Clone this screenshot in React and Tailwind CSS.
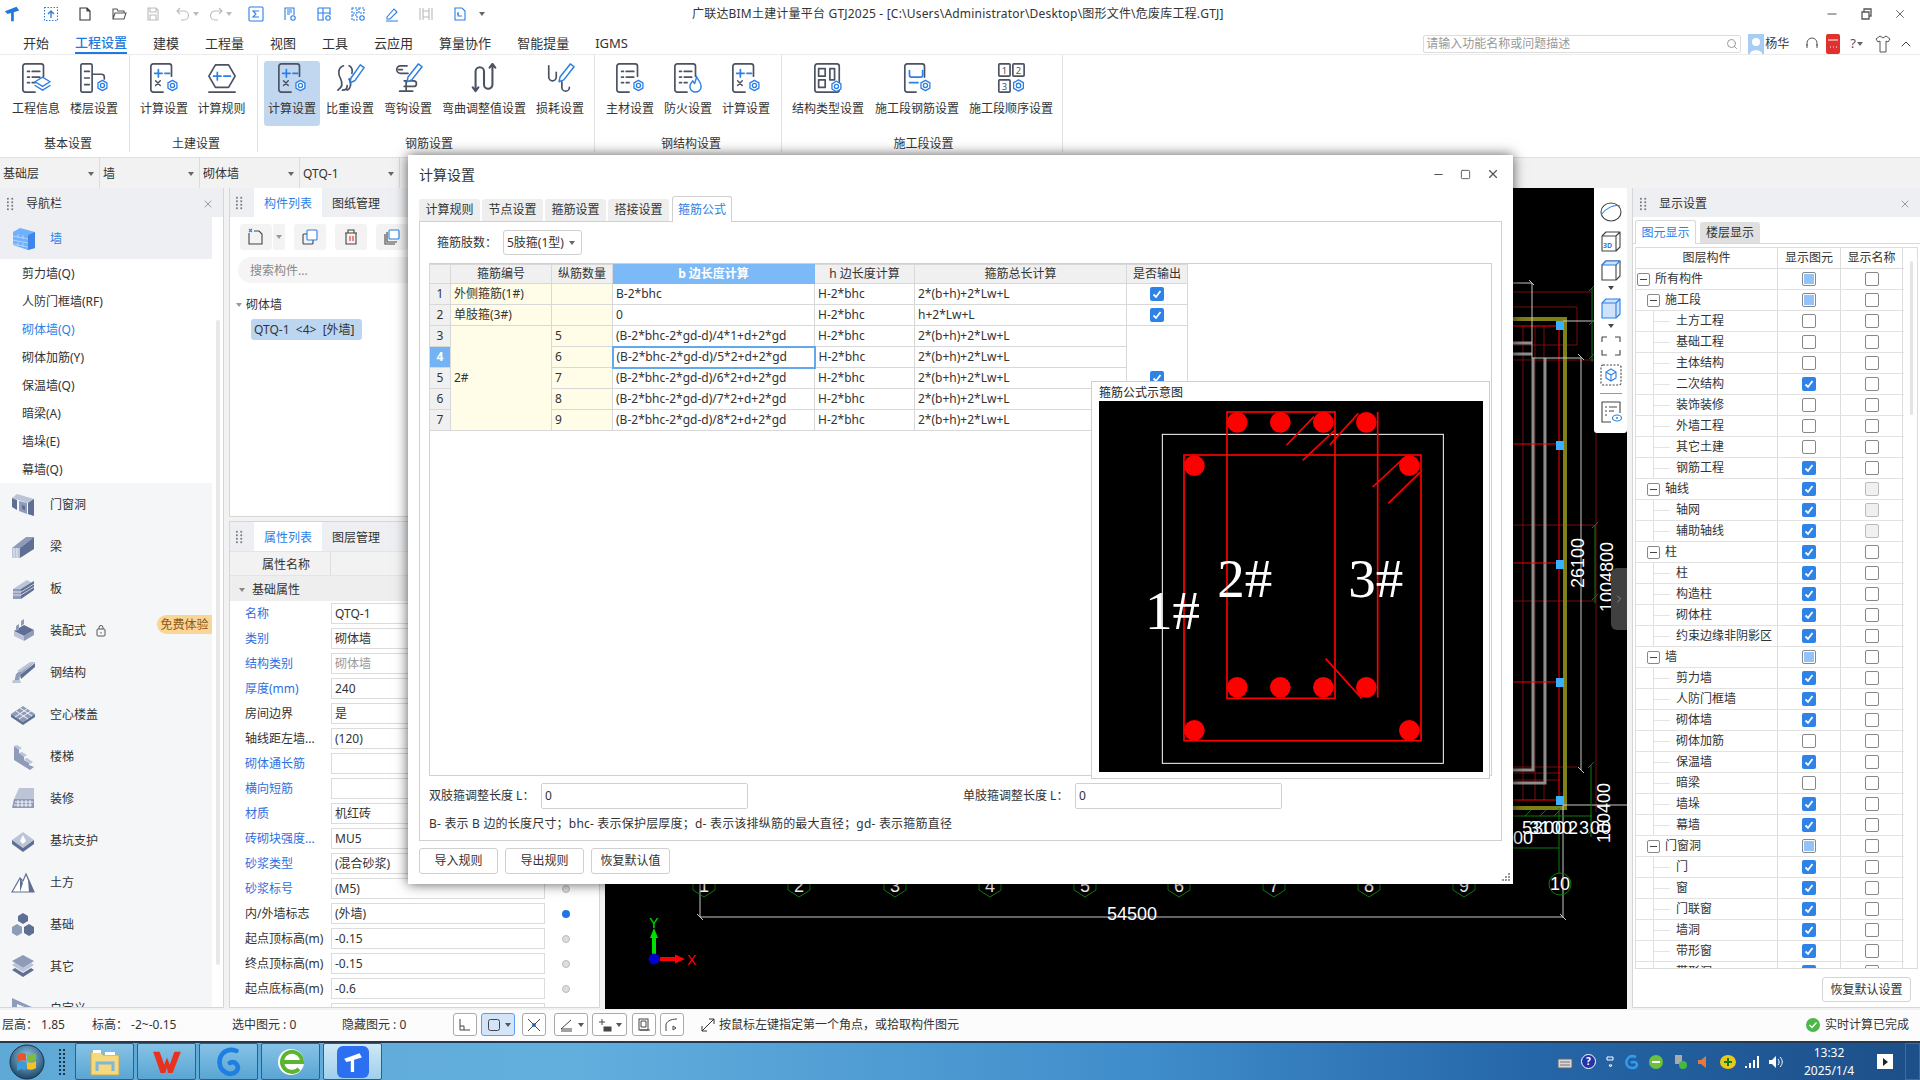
import { ChevronUp, Minus, Search, Square, X, ChevronRight } from 'lucide-react';

const INK = '#4b5262';
const BLUE = '#2b7fe6';

const Gear = ({ x, y, r = 5.5 }) => {
  const pts = [0, 1, 2, 3, 4, 5]
    .map((i) => {
      const a = (Math.PI / 3) * i + Math.PI / 6;
      return `${x + r * Math.cos(a)},${y + r * Math.sin(a)}`;
    })
    .join(' ');
  return (
    <g fill="#fff" stroke={BLUE} strokeWidth="1.4">
      <polygon points={pts} />
      <circle cx={x} cy={y} r={r * 0.4} />
    </g>
  );
};

const Doc = () => <path d="M24 14V3.5A2.5 2.5 0 0 0 21.500 1h-17A2.500 2.500 0 0 0 2 3.500v25A2.500 2.500 0 0 0 4.500 31H15" />;
const ListLines = () => (
  <path d="M7 9h2M12 9h8M7 15h2M12 15h8M7 21h2M12 21h3" />
);
const PlusMinusX = () => (
  <>
    <path d="M6 11h8M10 7v8M17 11h5" stroke={BLUE} />
    <path d="M7 19l5 5M12 19l-5 5" strokeWidth="1.6" />
  </>
);
const Pen = ({ d = 'M27 2l4 3-10 14-5 2 1-5z' }) => <path d={d} stroke={BLUE} strokeWidth="1.6" fill="#fff" />;

const RIBBON_ICONS = {
  info: (
    <>
      <Doc />
      <ListLines />
      <path d="M23 15l8 5-8 5-8-5z" stroke={BLUE} strokeWidth="1.5" fill="#fff" />
      <path d="M15 24l8 5 8-5" stroke={BLUE} strokeWidth="1.5" />
    </>
  ),
  floor: (
    <>
      <path d="M14 29.500A1.500 1.500 0 0 1 12.500 31h-9A1.500 1.500 0 0 1 2 29.500v-27A1.500 1.500 0 0 1 3.500 1h9A1.500 1.500 0 0 1 14 2.500zM14 12h10a3 3 0 0 1 3 3v2" />
      <path d="M6 9h5M6 16h5M6 23h5" />
      <Gear x={25} y={24} />
    </>
  ),
  calc: (
    <>
      <Doc />
      <PlusMinusX />
      <Gear x={25} y={24} />
    </>
  ),
  rule: (
    <>
      <path d="M9 2h14l7 12-7 12H9L2 14z" />
      <path d="M7 14h8M11 10v8M18 14h7" stroke={BLUE} />
      <path d="M2 31h28" />
    </>
  ),
  density: (
    <>
      <path d="M9 3C3 5 3 12 6 17c2 4 2 9-3 12M8 29c3 0 5-2 5-5M15 3c3 1 4 5 3 8M15 17c3 4 2 10-2 12" />
      <Pen />
    </>
  ),
  hook: (
    <>
      <path d="M15 3H8a3.500 3.500 0 0 0 0 8h8M6 7h4M12 25h10a3 3 0 0 0 0-6H12M7 30h14M14 20v10" />
      <Pen d="M27 1l4 3-11 14-5 2 1-5z" />
    </>
  ),
  bend: <path d="M7 29V9a4.500 4.500 0 0 1 9 0v14a4.500 4.500 0 0 0 9 0V2M4 26l3 4 3-4M22 5l3-4 3 4" strokeWidth="2.200" />,
  loss: (
    <>
      <path d="M4 3v12a4 4 0 0 0 8 0V10M18 20v6a4 4 0 0 0 8 0" />
      <Pen d="M27 1l4 3-11 14-5 2 1-5z" />
    </>
  ),
  main: (
    <>
      <Doc />
      <ListLines />
      <Gear x={25} y={24} />
    </>
  ),
  fire: (
    <>
      <Doc />
      <ListLines />
      <path d="M25 14c1 4 5 6 5 11a6 6 0 0 1-12 0c0-3 2-4 3-6 1 1 1 2 2 3 1-3 2-5 2-8z" stroke={BLUE} strokeWidth="1.500" fill="#fff" />
    </>
  ),
  struct: (
    <>
      <rect x="2" y="1" width="26" height="30" rx="2.500" />
      <rect x="6" y="6" width="7" height="8" />
      <rect x="6" y="18" width="7" height="8" />
      <path d="M18 6h5v12h-5z" />
      <Gear x={25} y={25} />
    </>
  ),
  stage: (
    <>
      <path d="M24 15V3.500A2.500 2.500 0 0 0 21.500 1h-16A2.500 2.500 0 0 0 3 3.500v25A2.500 2.500 0 0 0 5.500 31H15" />
      <path d="M8 8v5a2 2 0 0 0 2 2h10a2 2 0 0 0 2-2V8M8 21h9" stroke={BLUE} />
      <Gear x={25} y={24} />
    </>
  ),
  order: (
    <>
      <rect x="3" y="1" width="12" height="13" rx="1" />
      <rect x="18" y="1" width="12" height="13" rx="1" />
      <rect x="3" y="18" width="12" height="13" rx="1" />
      <text x="9" y="12" fontSize="10" textAnchor="middle" fill={INK} stroke="none">1</text>
      <text x="24" y="12" fontSize="10" textAnchor="middle" fill={INK} stroke="none">2</text>
      <text x="9" y="29" fontSize="10" textAnchor="middle" fill={INK} stroke="none">3</text>
      <Gear x={24} y={24} r={6} />
    </>
  ),
};

const RIBBON = [
  { label: '基本设置', cls: 'w-[130px] pl-[7px]', items: [['info', '工程信息', 'w-[58px]'], ['floor', '楼层设置', 'w-[58px]']] },
  { label: '土建设置', cls: 'w-[128px] pl-[5px]', items: [['calc', '计算设置', 'w-[58px]'], ['rule', '计算规则', 'w-[57px]']] },
  {
    label: '钢筋设置',
    cls: 'w-[337px] pl-[6px]',
    items: [
      ['calc', '计算设置', 'w-[56px] bg-[#c0d7ef] rounded-[3px]'],
      ['density', '比重设置', 'w-[60px]'],
      ['hook', '弯钩设置', 'w-[56px]'],
      ['bend', '弯曲调整值设置', 'w-[96px]'],
      ['loss', '损耗设置', 'w-[56px]'],
    ],
  },
  { label: '钢结构设置', cls: 'w-[187px] pl-[6px]', items: [['main', '主材设置', 'w-[58px]'], ['fire', '防火设置', 'w-[58px]'], ['calc', '计算设置', 'w-[58px]']] },
  { label: '施工段设置', cls: 'w-[281px] pl-[3px]', items: [['struct', '结构类型设置', 'w-[86px]'], ['stage', '施工段钢筋设置', 'w-[92px]'], ['order', '施工段顺序设置', 'w-[96px]']] },
];

const TABS = ['开始', '工程设置', '建模', '工程量', '视图', '工具', '云应用', '算量协作', '智能提量', 'IGMS'];

const Quick = ({ children, cls = 'w-[16px]', color = '#2b7fe6' }) => (
  <svg viewBox="0 0 16 16" className={`h-[16px] shrink-0 ${cls}`} fill="none" stroke={color} strokeWidth="1.100">
    {children}
  </svg>
);

const Caret = ({ color = '#666', cls = '' }) => (
  <span className={`inline-block h-0 w-0 border-x-[3px] border-t-[4px] border-x-transparent ${cls}`} style={{ borderTopColor: color }} />
);

function TitleBar() {
  return (
    <div className="flex h-[27px] items-center bg-white">
      <div className="flex w-[692px] shrink-0 items-center">
        <svg viewBox="0 0 20 20" className="ml-[3px] h-[18px] w-[18px]">
          <path d="M2 7l13-5 3 4-6 2v10h-3V9L5 10z" fill="#1f7ae0" />
        </svg>
        <div className="ml-[22px] flex items-center gap-[18px]">
          <Quick>
            <rect x="1.500" y="1.500" width="13" height="13" strokeDasharray="1.500 1.500" />
            <path d="M8 12V5M5 8l3-3 3 3" strokeWidth="1.400" />
          </Quick>
          <Quick color="#333">
            <path d="M3 2h7l3 3v9H3zM10 2v3h3" />
          </Quick>
          <Quick color="#555">
            <path d="M2 13V3h4l1 2h6v2M2 13l2-6h11l-2 6z" />
          </Quick>
          <Quick color="#bbb">
            <path d="M3 2h8l2 2v10H3zM5 2v4h6V2M5 14v-5h6v5" />
          </Quick>
          <div className="-ml-[4px] flex items-center gap-[2px]">
            <Quick color="#bbb">
              <path d="M5 2L2 5l3 3M2 5h7a4 4 0 0 1 0 9H6" />
            </Quick>
            <Caret color="#bbb" />
          </div>
          <div className="-ml-[9px] flex items-center gap-[2px]">
            <Quick color="#bbb">
              <path d="M11 2l3 3-3 3M14 5H7a4 4 0 0 0 0 9h3" />
            </Quick>
            <Caret color="#bbb" />
          </div>
          <div className="-ml-[2px]">
            <Quick>
              <rect x="1" y="1" width="14" height="14" rx="1" />
              <path d="M11 5H5l3 3-3 3h6" />
            </Quick>
          </div>
          <Quick>
            <path d="M3 14V2h9v7M5 4h5M5 6h5M5 8h3" />
            <circle cx="11" cy="12" r="2.200" />
          </Quick>
          <Quick>
            <path d="M2 2h12v7M2 2v12h6M2 7h12M7 2v12" />
            <circle cx="12" cy="12" r="2.200" />
          </Quick>
          <Quick>
            <path d="M2 2h5v5H2zM9 2h5v5H9zM2 9h5v5H2z" strokeDasharray="2 1" />
            <circle cx="12" cy="12" r="2.200" />
          </Quick>
          <Quick>
            <path d="M3 11l7-8 3 3-7 7H3zM2 15h12" />
          </Quick>
          <Quick color="#bbb">
            <path d="M2 2v12M14 2v12M5 2v12M11 2v12M5 5h6M5 11h6" />
          </Quick>
          <Quick>
            <path d="M3 14V2h7l3 3v9zM6 6v4h4M5 8h2" />
          </Quick>
          <Caret color="#666" cls="-ml-[7px]" />
        </div>
      </div>
      <div className="text-[12px] tracking-[0.2px] whitespace-nowrap text-[#333]">
        广联达BIM土建计量平台 GTJ2025 - [C:\Users\Administrator\Desktop\图形文件\危废库工程.GTJ]
      </div>
      <div className="ml-auto flex items-center gap-[21px] pr-[13px] text-[#555]">
        <Minus size={14} strokeWidth={2} />
        <svg viewBox="0 0 12 12" className="h-[12px] w-[12px]" fill="none" stroke="#555" strokeWidth="1.300">
          <path d="M2 4h7v7H2zM4 4V1h7v7H9" />
        </svg>
        <X size={14} strokeWidth={1.500} />
      </div>
    </div>
  );
}

function TabBar() {
  return (
    <div className="flex h-[28px] items-stretch border-b border-[#ececec] bg-white">
      <div className="flex items-stretch pl-[23px] text-[13px] text-[#333]">
        {TABS.map((t) => (
          <div key={t} className={`mr-[26px] flex items-center pt-[6px] ${t === '工程设置' ? 'border-b-[2px] border-[#1f7ae0] font-medium text-[#1f7ae0]' : ''}`}>
            {t}
          </div>
        ))}
      </div>
      <div className="ml-auto flex items-center pt-[6px] pr-[6px]">
        <div className="flex h-[18px] w-[318px] items-center justify-between rounded-[2px] border border-[#dcdcdc] px-[2px] text-[12px] text-[#999]">
          请输入功能名称或问题描述
          <Search size={12} />
        </div>
        <svg viewBox="0 0 16 20" className="ml-[7px] h-[20px] w-[16px]">
          <rect width="16" height="20" fill="#a8cdf5" />
          <circle cx="8" cy="8" r="4" fill="#fff" />
          <path d="M2 20c0-5 12-5 12 0z" fill="#fff" />
        </svg>
        <span className="ml-[1px] text-[12px] text-[#333]">杨华</span>
        <svg viewBox="0 0 16 16" className="ml-[15px] h-[16px] w-[16px]" fill="none" stroke="#555">
          <path d="M3 10V7a5 5 0 0 1 10 0v3M3 8v4M13 8v4" />
        </svg>
        <svg viewBox="0 0 14 20" className="ml-[6px] h-[20px] w-[14px]">
          <rect width="14" height="20" rx="2" fill="#e0312f" />
          <path d="M2 6h10M4 13h1M7 13h1M10 13h1" stroke="#fff" strokeWidth="1" />
        </svg>
        <span className="ml-[10px] text-[13px] text-[#555]">?</span>
        <Caret cls="ml-[1px]" />
        <svg viewBox="0 0 16 18" className="ml-[12px] h-[18px] w-[16px]" fill="none" stroke="#555">
          <path d="M5 1L1 4l2 3 2-1v11h6V6l2 1 2-3-4-3-3 2z" />
        </svg>
        <ChevronUp size={16} strokeWidth={1.500} className="ml-[7px] text-[#444]" />
      </div>
    </div>
  );
}

function Ribbon() {
  return (
    <div className="flex h-[102px] bg-white">
      {RIBBON.map((g) => (
        <div key={g.label} className={`flex h-[97px] flex-col border-r border-[#e3e3e3] ${g.cls}`}>
          <div className="mt-[6px] flex h-[70px]">
            {g.items.map(([icon, label, cls], i) => (
              <div key={label + i} className={`flex flex-col items-center pt-[2px] ${cls}`}>
                <svg viewBox="0 0 32 32" className="h-[30px] w-[30px]" fill="none" stroke={INK} strokeWidth="1.800" strokeLinecap="round" strokeLinejoin="round">
                  {RIBBON_ICONS[icon]}
                </svg>
                <span className="mt-[8px] text-[12px] leading-[16px] whitespace-nowrap text-[#333]">{label}</span>
              </div>
            ))}
          </div>
          <div className="mt-[10px] text-center text-[12px] leading-[16px] text-[#333]">{g.label}</div>
        </div>
      ))}
    </div>
  );
}

function ComboBar() {
  return (
    <div className="flex h-[31px] items-center border-t border-[#dfdfdf] bg-[#f2f2f2]">
      {['基础层', '墙', '砌体墙', 'QTQ-1'].map((c) => (
        <div key={c} className="flex h-full w-[100px] items-center justify-between border-r border-[#dcdcdc] pt-[2px] pr-[5px] pl-[3px] text-[12px] text-[#333]">
          {c}
          <Caret />
        </div>
      ))}
    </div>
  );
}

const C1 = '#5f6f93';
const C2 = '#8e9cba';
const C3 = '#bcc5d8';

const NAV_ICONS = {
  wall: (
    <>
      <path d="M1 6l7-4 15 4v16l-7 2-15-5z" fill="#6fb0ff" />
      <path d="M16 9l7-3v16l-7 2z" fill="#3f86e8" />
      <path d="M1 10l15 3M1 14l15 3M1 18l15 3M6 8v4M11 9v4M6 16v4M11 17v4" stroke="#bcd8fb" strokeWidth=".8" fill="none" />
    </>
  ),
  door: (
    <>
      <path d="M1 6l5-4 17 5v17l-6-2V11L1 6z" fill={C3} />
      <path d="M1 6l5 2v10l-5-3z" fill={C1} />
      <path d="M8 9l8 2v11l-8-3z" fill={C2} />
      <path d="M11 13l3 1v4l-3-1z" fill={C1} />
      <path d="M17 11l6-4v17l-6-2z" fill={C1} />
    </>
  ),
  beam: (
    <>
      <path d="M1 14l14-11h8L9 14z" fill={C2} />
      <path d="M9 14L23 3v12L9 24z" fill={C1} />
      <path d="M1 14h8v10H1z" fill={C3} />
      <path d="M3 14v10M6 14v10" stroke="#fff" strokeWidth=".6" />
    </>
  ),
  slab: (
    <>
      <path d="M2 13l14-9 7 4-13 9z" fill={C3} />
      <path d="M2 13h8v10H2z" fill={C2} />
      <path d="M10 13l13-8v9L10 23z" fill={C1} />
      <path d="M2 16h8M2 19h8M10 16l13-8M10 19l13-8" stroke="#fff" strokeWidth=".7" />
    </>
  ),
  pre: (
    <>
      <path d="M3 13l10-6 10 5-10 6z" fill={C1} />
      <path d="M3 13l10 5v5L3 18z" fill={C3} />
      <path d="M13 18l10-6v5l-10 6z" fill={C2} />
      <path d="M5 8l3-2v6l-3 1zM10 3l3-2v5l-3 2z" fill={C2} />
    </>
  ),
  steel: (
    <>
      <path d="M3 23l2-9L20 2h4L9 15l-1 8z" fill={C2} />
      <path d="M1 23h9l-1-3H2zM6 11l4 1 14-10h-5z" fill={C3} />
      <path d="M9 15L24 3v4L10 19z" fill={C1} />
    </>
  ),
  hollow: (
    <>
      <path d="M0 12l12-8 12 8-12 8z" fill={C2} />
      <path d="M0 12l12 8v3L0 15zM12 20l12-8v3l-12 8z" fill={C1} />
      <path d="M5 9l12 8M9 6l12 8M4 15l12-8M8 17L20 9" stroke="#fff" strokeWidth=".9" />
    </>
  ),
  stair: (
    <>
      <path d="M3 2l5 3v4l5 3v4l5 3v2l5 2-4 3L3 16z" fill={C2} />
      <path d="M3 2l3-1 5 3-3 2zM8 9l3-1 5 3-3 2zM13 15l3-1 6 4-3 2z" fill={C3} />
    </>
  ),
  deco: (
    <>
      <path d="M8 2h15v11H3z" fill={C3} />
      <path d="M3 13h20v9H1z" fill={C2} />
      <path d="M4 16h18M3 19h18M7 14v7M11 14v7M15 14v7M19 14v7" stroke="#fff" strokeWidth=".9" />
    </>
  ),
  pit: (
    <>
      <path d="M1 12l11-8 11 8-11 8z" fill={C3} />
      <path d="M1 12l11 8v4L1 16zM12 20l11-8v4l-11 8z" fill={C1} />
      <path d="M9 13l3-6 3 6-3 3z" fill="#fff" />
    </>
  ),
  earth: (
    <>
      <path d="M1 22L9 8l3 3 3-7 8 18z" fill="#fff" stroke={C1} strokeWidth="1.200" />
      <path d="M9 8l3 5-3 9zM15 4l2 6 1 12h5z" fill={C1} />
    </>
  ),
  base: (
    <>
      <path d="M12 1l5 3v5l-5 3-5-3V4z" fill={C1} />
      <path d="M6 12l5 3v6l-5 3-5-3v-6z" fill={C2} />
      <path d="M18 12l5 3v6l-5 3-5-3v-6z" fill={C1} />
    </>
  ),
  other: (
    <>
      <path d="M12 1l11 6-11 7L1 7z" fill={C2} />
      <path d="M1 11l3-2 8 5 8-5 3 2-11 7z" fill={C3} />
      <path d="M1 16l3-2 8 5 8-5 3 2-11 7z" fill={C1} />
    </>
  ),
  custom: <path d="M1 2l22 10-22 11zM6 8v9l10-5z" fill={C2} fillRule="evenodd" />,
};

const NavIcon = ({ id }) => (
  <svg viewBox="0 0 24 26" className="h-[26px] w-[24px] shrink-0">
    {NAV_ICONS[id]}
  </svg>
);

const PanelGrip = () => (
  <svg viewBox="0 0 8 14" className="h-[14px] w-[7px] shrink-0" fill="#777">
    {[1, 5, 9, 13].map((y) => (
      <g key={y}>
        <rect x="0" y={y - 1} width="2" height="2" />
        <rect x="5" y={y - 1} width="2" height="2" />
      </g>
    ))}
  </svg>
);

const SUB_ITEMS = ['剪力墙(Q)', '人防门框墙(RF)', '砌体墙(Q)', '砌体加筋(Y)', '保温墙(Q)', '暗梁(A)', '墙垛(E)', '幕墙(Q)'];
const NAV_REST = [
  ['door', '门窗洞'],
  ['beam', '梁'],
  ['slab', '板'],
  ['pre', '装配式'],
  ['steel', '钢结构'],
  ['hollow', '空心楼盖'],
  ['stair', '楼梯'],
  ['deco', '装修'],
  ['pit', '基坑支护'],
  ['earth', '土方'],
  ['base', '基础'],
  ['other', '其它'],
  ['custom', '自定义'],
];

function NavPanel() {
  return (
    <div className="flex h-[820px] w-[224px] shrink-0 flex-col overflow-hidden border-r border-b border-[#d6d6d6] bg-white">
      <div className="flex h-[29px] shrink-0 items-center bg-[#eeeff2] pt-[2px] pr-[9px] pl-[7px] text-[12px] text-[#333]">
        <PanelGrip />
        <span className="ml-[12px]">导航栏</span>
        <X size={12} className="ml-auto text-[#999]" />
      </div>
      <div className="flex min-h-0 flex-1">
        <div className="relative w-[212px] shrink-0">
          <div className="flex h-[42px] items-center bg-[#eeeff2] pt-[1px] pl-[12px]">
            <NavIcon id="wall" />
            <span className="ml-[14px] text-[12px] text-[#2b7fe6]">墙</span>
          </div>
          {SUB_ITEMS.map((s) => (
            <div key={s} className={`flex h-[28px] items-center pt-[2px] pl-[22px] text-[12px] ${s === '砌体墙(Q)' ? 'text-[#2b7fe6]' : 'text-[#333]'}`}>
              {s}
            </div>
          ))}
          <div className="bg-[#f5f6f8]">
            {NAV_REST.map(([id, label]) => (
              <div key={id} className="flex h-[42px] items-center pt-[2px] pl-[11px] text-[12px] text-[#333]">
                <NavIcon id={id} />
                <span className="ml-[15px]">{label}</span>
                {id === 'pre' && (
                  <svg viewBox="0 0 10 12" className="ml-[10px] h-[12px] w-[10px]" fill="none" stroke="#555">
                    <rect x="1" y="4" width="8" height="7" rx="1" />
                    <path d="M3 4V2.500a2 2 0 0 1 4 0V4M5 7v1.500" />
                  </svg>
                )}
                {id === 'pre' && (
                  <div className="absolute top-[398px] right-0 flex h-[19px] w-[55px] items-center justify-center rounded-l-full bg-[#fbd596] text-[12px] text-[#8a5a1a]">
                    免费体验
                  </div>
                )}
              </div>
            ))}
          </div>
        </div>
        <div className="mt-[103px] ml-[4px] h-[645px] w-[4px] rounded-full bg-[#e8e8e8]" />
      </div>
    </div>
  );
}

const ToolBtn = ({ children }) => (
  <div className="flex h-[26px] w-[32px] items-center justify-center rounded-[3px] bg-[#f3f3f3]">
    <svg viewBox="0 0 18 18" className="h-[18px] w-[18px]" fill="none" stroke="#444" strokeWidth="1.100">
      {children}
    </svg>
  </div>
);

const PROPS = [
  ['名称', 'QTQ-1', 1],
  ['类别', '砌体墙', 1],
  ['结构类别', '砌体墙', 1, 1],
  ['厚度(mm)', '240', 1],
  ['房间边界', '是', 0],
  ['轴线距左墙...', '(120)', 0],
  ['砌体通长筋', '', 1],
  ['横向短筋', '', 1],
  ['材质', '机红砖', 1],
  ['砖砌块强度...', 'MU5', 1],
  ['砂浆类型', '(混合砂浆)', 1],
  ['砂浆标号', '(M5)', 1],
  ['内/外墙标志', '(外墙)', 0],
  ['起点顶标高(m)', '-0.15', 0],
  ['终点顶标高(m)', '-0.15', 0],
  ['起点底标高(m)', '-0.6', 0],
  ['', '', 0],
];

function PanelTabs({ first, second }) {
  return (
    <div className="flex h-[29px] shrink-0 items-stretch bg-[#eeeff2] text-[12px]">
      <div className="flex w-[24px] items-center pl-[6px]">
        <PanelGrip />
      </div>
      <div className="flex w-[68px] items-center justify-center bg-white pt-[2px] text-[#2b7fe6]">{first}</div>
      <div className="flex w-[68px] items-center justify-center pt-[2px] text-[#333]">{second}</div>
    </div>
  );
}

function MiddlePanels() {
  return (
    <div className="ml-[5px] flex w-[371px] shrink-0 flex-col">
      <div className="flex h-[329px] flex-col overflow-hidden border border-t-0 border-[#d6d6d6] bg-white">
        <PanelTabs first="构件列表" second="图纸管理" />
        <div className="mt-[7px] flex gap-[9px] pl-[10px]">
          <div className="flex items-center">
            <ToolBtn>
              <path d="M2 5v11h13V6l-3-3H7" />
              <path d="M2 1l3 3M5 1L2 4" stroke={BLUE} />
            </ToolBtn>
            <div className="ml-[1px] flex h-[26px] w-[12px] items-center justify-center rounded-[2px] bg-[#f3f3f3]">
              <Caret color="#999" />
            </div>
          </div>
          <ToolBtn>
            <rect x="2" y="6" width="10" height="10" rx="1" />
            <rect x="6" y="2" width="10" height="10" rx="1" stroke={BLUE} fill="#fff" />
          </ToolBtn>
          <ToolBtn>
            <path d="M3 5h12M6 5V2h6v3M4 5v11h10V5" />
            <path d="M8 8v5M11 8v5" stroke="#e0312f" />
          </ToolBtn>
          <ToolBtn>
            <path d="M2 6v10h10M4 4v10h10" />
            <rect x="6" y="2" width="10" height="9" rx="1" stroke={BLUE} fill="#fff" />
          </ToolBtn>
        </div>
        <div className="mt-[7px] ml-[8px] flex h-[26px] items-center rounded-full bg-[#f5f5f5] pt-[2px] pl-[12px] text-[12px] text-[#888]">搜索构件...</div>
        <div className="mt-[12px] flex h-[20px] items-center pl-[6px] text-[12px] text-[#333]">
          <Caret color="#999" cls="mr-[4px]" />
          砌体墙
        </div>
        <div className="mt-[4px] ml-[21px] flex h-[21px] w-[111px] items-center rounded-[3px] bg-[#bcd6f1] pl-[3px] text-[12px] whitespace-pre text-[#333]">
          QTQ-1  {'<4>'}  [外墙]
        </div>
      </div>
      <div className="mt-[4px] flex h-[487px] flex-col overflow-hidden border border-[#d6d6d6] bg-white">
        <PanelTabs first="属性列表" second="图层管理" />
        <div className="flex h-[25px] shrink-0 items-stretch border-y border-[#e4e4e4] bg-[#f2f2f2] text-[12px] text-[#333]">
          <div className="flex w-[101px] items-center justify-center border-r border-[#dcdcdc] pt-[2px] pl-[12px]">属性名称</div>
        </div>
        <div className="flex h-[25px] shrink-0 items-center bg-[#eeeeee] pt-[2px] pl-[9px] text-[12px] text-[#333]">
          <Caret color="#888" cls="mr-[7px]" />
          基础属性
        </div>
        <div className="flex min-h-0 flex-1 flex-col text-[12px]">
          {PROPS.map(([k, v, blue, muted], i) => (
            <div key={k + i} className="flex h-[25px] shrink-0 items-center">
              <div className={`w-[101px] shrink-0 truncate pl-[15px] whitespace-nowrap ${blue ? 'text-[#2e6fe0]' : 'text-[#333]'}`}>{k}</div>
              <div className={`flex h-[21px] w-[214px] shrink-0 items-center border border-[#dcdcdc] pl-[3px] ${muted ? 'text-[#999]' : 'text-[#333]'}`}>{v}</div>
              <div className={`ml-[17px] h-[8px] w-[8px] rounded-full ${k === '内/外墙标志' ? 'bg-[#1f75e8]' : 'border border-[#bbb] bg-[#ddd]'}`} />
            </div>
          ))}
        </div>
      </div>
    </div>
  );
}

const AXES = [704, 799, 895, 990, 1085, 1179, 1274, 1369, 1464];

function CadDrawing() {
  const red = [326, 444, 563, 682, 800];
  return (
    <svg viewBox="605 188 1022 821" className="h-full w-full" fill="none">
      {/* dark red grid */}
      <g stroke="#7a0c0c" strokeWidth="1">
        <path d="M1513 292H1592M1513 307H1577V345H1513M1513 360H1594M1513 525H1594M1513 601H1594M1513 767H1577M1513 773H1560M1513 780H1560M1596 433V812M1523 326V800M1535 326V800M1544 326V800" />
      </g>
      <g stroke="#808018" strokeWidth="4">
        <path d="M1513 319H1565V808H1513" />
      </g>
      <g stroke="#8d8d8d" strokeWidth="3">
        <path d="M1533 358V770H1513M1545 358V783H1513M1513 343H1532M1513 354H1532" />
      </g>
      <g stroke="#ff0000" strokeWidth="1">
        {red.map((y) => (
          <path key={y} d={`M1513 ${y}H1559`} />
        ))}
        <path d="M1559 326V800" />
      </g>
      <g stroke="#c8c8c8" strokeWidth="1">
        <path d="M1513 283H1532V358H1581V770M1563 321H1594M1563 805H1627M1563 805V917H700V884" />
        <path d="M1529 280l5 5M1578 354l6 6M1578 767l6 6M1560 914l6 6M697 914l6 6" />
      </g>
      <g stroke="#0d7d0d" strokeWidth="1">
        <path d="M1592 288V362M1595 525V603M1591 765V837M1513 816H1592M1513 848H1559M1559 808V873" />
        <path d="M1589 291l6-6M1589 325l6-6M1589 359l6-6M1592 528l6-6M1592 600l6-6M1588 768l6-6M1588 834l6-6M1525 816l6-6M1540 816l6-6M1554 816l6-6" />
        <circle cx="1560" cy="884" r="11" />
        {AXES.map((x) => (
          <path key={x} d={`M${x - 11} 884V890L${x} 897L${x + 11} 890V884`} />
        ))}
      </g>
      <g fill="#3bb0ff">
        {[321, 441, 560, 678, 796].map((y) => (
          <rect key={y} x="1556" y={y} width="8" height="9" />
        ))}
      </g>
      <g fill="#fff" fontFamily="'Liberation Sans',sans-serif" fontSize="18">
        <text x="1132" y="920" textAnchor="middle">54500</text>
        <text x="1560" y="890" textAnchor="middle">10</text>
        {AXES.map((x, i) => (
          <text key={x} x={x} y="892" textAnchor="middle">{i + 1}</text>
        ))}
        <text x="1522" y="834" letterSpacing="1">5300</text>
        <text x="1529" y="834" letterSpacing="1">3100</text>
        <text x="1568" y="834" letterSpacing="1">2300</text>
        <text x="1513" y="844">00</text>
        <text transform="rotate(-90 1584 563)" x="1584" y="563" textAnchor="middle">26100</text>
        <text transform="rotate(-90 1613 577)" x="1613" y="577" textAnchor="middle">1004800</text>
        <text transform="rotate(-90 1610 813)" x="1610" y="813" textAnchor="middle">100400</text>
      </g>
      {/* axis gizmo */}
      <path d="M654 955V936" stroke="#00e000" strokeWidth="4" />
      <path d="M654 928l-4 10h8z" fill="#00e000" />
      <path d="M660 959H678" stroke="#ff0000" strokeWidth="4" />
      <path d="M685 959l-10-4.500v9z" fill="#ff0000" />
      <circle cx="654" cy="959" r="5.500" fill="#0000c8" />
      <text x="654" y="928" fill="#00e000" fontSize="14" textAnchor="middle" fontFamily="'Liberation Sans',sans-serif">Y</text>
      <text x="687" y="965" fill="#ff0000" fontSize="14" fontFamily="'Liberation Sans',sans-serif">X</text>
    </svg>
  );
}

const ViewIcon = ({ children }) => (
  <svg viewBox="0 0 22 22" className="h-[22px] w-[22px]" fill="none" stroke="#444" strokeWidth="1.100" strokeLinejoin="round">
    {children}
  </svg>
);

function CanvasArea() {
  return (
    <div className="relative ml-[5px] h-[821px] w-[1022px] shrink-0 overflow-hidden bg-black">
      <CadDrawing />
      <div className="absolute top-0 right-0 flex h-[245px] w-[33px] flex-col items-center gap-[7px] rounded-b-[3px] bg-white pt-[13px]">
        <ViewIcon>
          <ellipse cx="11" cy="11" rx="10" ry="9" />
          <path d="M1 14C6 7 14 3 20 5" stroke={BLUE} />
        </ViewIcon>
        <ViewIcon>
          <path d="M2 6h14v15H2zM2 6l4-4h14v15l-4 4M16 6l4-4" />
          <text x="3" y="18" fontSize="7" fontWeight="700" fill={BLUE} stroke="none">3D</text>
        </ViewIcon>
        <div className="flex flex-col items-center gap-[5px]">
          <ViewIcon>
            <path d="M6 2h14v15l-4 4H2V6z" />
            <path d="M2 6l4-4h14l-4 4z" fill="#cfe2fa" stroke={BLUE} />
            <path d="M16 6v15" />
          </ViewIcon>
          <Caret color="#444" />
        </div>
        <div className="flex flex-col items-center gap-[5px]">
          <ViewIcon>
            <path d="M2 6l4-4h14v15l-4 4H2z" fill="#cfe2fa" stroke={BLUE} />
            <path d="M2 6h14v15M16 6l4-4" stroke={BLUE} />
          </ViewIcon>
          <Caret color="#444" />
        </div>
        <ViewIcon>
          <path d="M2 7V2h5M15 2h5v5M20 15v5h-5M7 20H2v-5" />
        </ViewIcon>
        <ViewIcon>
          <rect x="1" y="1" width="20" height="20" rx="2" strokeDasharray="2 1.500" />
          <path d="M11 5l5 3v6l-5 3-5-3V8zM6 8l5 3 5-3M11 11v6" stroke={BLUE} />
        </ViewIcon>
        <div className="h-px w-[22px] bg-[#999]" />
        <ViewIcon>
          <path d="M11 21H2V1h18v11M5 6h2M9 6h8M5 10h2M9 10h5M5 14h2" />
          <ellipse cx="17" cy="17" rx="4.500" ry="3" stroke={BLUE} />
          <circle cx="17" cy="17" r="1" fill={BLUE} stroke="none" />
        </ViewIcon>
      </div>
      <div className="absolute top-[380px] right-0 flex h-[62px] w-[16px] items-center justify-center rounded-l-[6px] bg-[#404040] text-[#888]">
        <ChevronRight size={12} />
      </div>
    </div>
  );
}

const Check = ({ state }) => {
  if (state === 'half') {
    return (
      <div className="flex h-[14px] w-[14px] items-center justify-center rounded-[2px] border border-[#888] bg-white">
        <div className="h-[10px] w-[10px] bg-[#92c4fb]" />
      </div>
    );
  }
  if (state === 'on') {
    return (
      <div className="flex h-[14px] w-[14px] items-center justify-center rounded-[2px] bg-[#2f82e6]">
        <svg viewBox="0 0 12 12" className="h-[12px] w-[12px]" fill="none" stroke="#fff" strokeWidth="1.800">
          <path d="M2.500 6.500l2.500 2.500 4.500-6" />
        </svg>
      </div>
    );
  }
  return <div className={`h-[14px] w-[14px] rounded-[2px] border ${state === 'dis' ? 'border-[#bbb] bg-[#f0f0f0]' : 'border-[#888] bg-white'}`} />;
};

const LAYERS = [
  ['所有构件', 0, 'half'],
  ['施工段', 1, 'half'],
  ['土方工程', 2, 'off'],
  ['基础工程', 2, 'off'],
  ['主体结构', 2, 'off'],
  ['二次结构', 2, 'on'],
  ['装饰装修', 2, 'off'],
  ['外墙工程', 2, 'off'],
  ['其它土建', 2, 'off'],
  ['钢筋工程', 2, 'on'],
  ['轴线', 1, 'on', 'dis'],
  ['轴网', 2, 'on', 'dis'],
  ['辅助轴线', 2, 'on', 'dis'],
  ['柱', 1, 'on'],
  ['柱', 2, 'on'],
  ['构造柱', 2, 'on'],
  ['砌体柱', 2, 'on'],
  ['约束边缘非阴影区', 2, 'on'],
  ['墙', 1, 'half'],
  ['剪力墙', 2, 'on'],
  ['人防门框墙', 2, 'on'],
  ['砌体墙', 2, 'on'],
  ['砌体加筋', 2, 'off'],
  ['保温墙', 2, 'on'],
  ['暗梁', 2, 'off'],
  ['墙垛', 2, 'on'],
  ['幕墙', 2, 'on'],
  ['门窗洞', 1, 'half'],
  ['门', 2, 'on'],
  ['窗', 2, 'on'],
  ['门联窗', 2, 'on'],
  ['墙洞', 2, 'on'],
  ['带形窗', 2, 'on'],
  ['带形洞', 2, 'on'],
];

const TreeBox = () => (
  <div className="flex h-[13px] w-[13px] shrink-0 items-center justify-center rounded-[2px] border border-[#888] bg-white">
    <div className="h-px w-[7px] bg-[#444]" />
  </div>
);

function DisplayPanel() {
  return (
    <div className="ml-[5px] flex h-[820px] w-[288px] shrink-0 flex-col border-l border-b border-[#d6d6d6] bg-white text-[12px] text-[#333]">
      <div className="flex h-[29px] shrink-0 items-center bg-[#eeeff2] pt-[2px] pr-[9px] pl-[7px]">
        <PanelGrip />
        <span className="ml-[12px]">显示设置</span>
        <X size={12} className="ml-auto text-[#999]" />
      </div>
      <div className="flex h-[27px] shrink-0 items-end gap-[4px] border-b border-[#d8d8d8] pl-[2px]">
        <div className="-mb-px flex h-[24px] w-[61px] items-center justify-center rounded-t-[3px] border border-b-0 border-[#d8d8d8] bg-white text-[#2b7fe6]">图元显示</div>
        <div className="flex h-[21px] w-[60px] items-center justify-center rounded-t-[3px] bg-[#e0e0e0]">楼层显示</div>
      </div>
      <div className="mx-[2px] mt-[3px] flex h-[722px] w-[283px] shrink-0 overflow-hidden border border-[#dcdcdc]">
        <div className="w-[268px] shrink-0">
          <div className="flex h-[21px] items-center border-b border-[#dcdcdc]">
            <div className="w-[141px] text-center">图层构件</div>
            <div className="w-[63px] border-l border-[#dcdcdc] text-center leading-[20px]">显示图元</div>
            <div className="w-[63px] border-x border-[#dcdcdc] text-center leading-[20px]">显示名称</div>
          </div>
          {LAYERS.map(([name, level, shown, label], i) => (
            <div key={name + i} className="flex h-[21px] items-center border-b border-[#e2e2e2]">
              <div className="flex h-full w-[141px] shrink-0 items-center">
                {level === 0 && (
                  <>
                    <div className="ml-[1px]">
                      <TreeBox />
                    </div>
                    <span className="ml-[5px]">{name}</span>
                  </>
                )}
                {level === 1 && (
                  <>
                    <div className="ml-[11px]">
                      <TreeBox />
                    </div>
                    <span className="ml-[5px]">{name}</span>
                  </>
                )}
                {level === 2 && (
                  <>
                    <div className="ml-[17px] flex h-full w-[23px] shrink-0 items-center border-l border-[#e0e0e0]">
                      <div className="h-px w-[16px] bg-[#e4e4e4]" />
                    </div>
                    <span className="whitespace-nowrap">{name}</span>
                  </>
                )}
              </div>
              <div className="flex h-full w-[63px] shrink-0 items-center justify-center border-l border-[#dcdcdc]">
                <Check state={shown} />
              </div>
              <div className="flex h-full w-[63px] shrink-0 items-center justify-center border-x border-[#dcdcdc]">
                <Check state={label ?? 'off'} />
              </div>
            </div>
          ))}
        </div>
        <div className="mt-[13px] ml-[6px] h-[154px] w-[3px] rounded-full bg-[#e4e4e4]" />
      </div>
      <div className="mt-[8px] flex justify-end pr-[9px]">
        <div className="flex h-[25px] w-[89px] items-center justify-center rounded-[3px] border border-[#d4d4d4]">恢复默认设置</div>
      </div>
    </div>
  );
}

const StatusBtn = ({ cls = 'w-[24px]', active, caret, children }) => (
  <div className={`flex h-[23px] shrink-0 items-center justify-center gap-[3px] rounded-[3px] border ${active ? 'border-[#5b9df0] bg-[#d5e5f9]' : 'border-[#aaa] bg-white'} ${cls}`}>
    <svg viewBox="0 0 16 16" className="h-[16px] w-[16px]" fill="none" stroke="#444" strokeWidth="1">
      {children}
    </svg>
    {caret && <Caret color="#555" />}
  </div>
);

function StatusBar() {
  return (
    <div className="flex h-[31px] items-center bg-[#fcfcfc] pb-[2px] text-[12px] text-[#333]">
      <span className="ml-[2px] w-[90px]">层高： 1.85</span>
      <span className="w-[140px]">标高： -2~-0.15</span>
      <span className="w-[110px]">选中图元 : 0</span>
      <span className="w-[111px]">隐藏图元 : 0</span>
      <StatusBtn>
        <path d="M3 2v11h10M3 9h4v4" />
      </StatusBtn>
      <StatusBtn active caret cls="ml-[4px] w-[34px]">
        <rect x="2.500" y="2.500" width="11" height="11" rx="2" />
      </StatusBtn>
      <StatusBtn cls="ml-[7px] w-[24px]">
        <path d="M2 2l12 12M14 2L2 14" />
        <circle cx="8" cy="8" r="1.500" stroke={BLUE} />
      </StatusBtn>
      <StatusBtn caret cls="ml-[8px] w-[34px]">
        <path d="M2 12L12 3M2 12h11M2 14h11" />
      </StatusBtn>
      <StatusBtn caret cls="ml-[4px] w-[35px]">
        <path d="M2 5h6M5 2v6" />
        <rect x="7" y="10" width="7" height="4" fill="#444" />
      </StatusBtn>
      <StatusBtn cls="ml-[5px] w-[24px]">
        <rect x="3" y="2" width="9" height="11" />
        <path d="M4 13h10M5 4h5v6H5z" />
      </StatusBtn>
      <StatusBtn cls="ml-[4px] w-[24px]">
        <path d="M2 14V8c0-3 4-6 11-6M9 9v4l3-2z" />
      </StatusBtn>
      <svg viewBox="0 0 16 16" className="ml-[16px] h-[16px] w-[16px]" fill="none" stroke="#333">
        <path d="M2 14L14 2M9 2h5v5M2 9v5h5" />
      </svg>
      <span className="ml-[3px]">按鼠标左键指定第一个角点，或拾取构件图元</span>
      <svg viewBox="0 0 14 14" className="ml-auto h-[14px] w-[14px]">
        <circle cx="7" cy="7" r="7" fill="#4cb848" />
        <path d="M3.500 7l2.500 2.500 4.500-5" stroke="#fff" strokeWidth="1.300" fill="none" />
      </svg>
      <span className="mr-[11px] ml-[5px]">实时计算已完成</span>
    </div>
  );
}

const TaskBtn = ({ active, children }) => (
  <div className={`flex h-[37px] w-[59px] items-center justify-center rounded-[2px] border border-[#2a5f8f] ${active ? 'bg-[linear-gradient(180deg,#cfe8f5,#9fd0ea)]' : 'bg-[linear-gradient(180deg,#86c3e6,#5aa5d3)]'}`}>
    {children}
  </div>
);

function TaskBar() {
  return (
    <div className="flex h-[39px] items-center border-t-[2px] border-[#26384d] bg-[linear-gradient(90deg,#5fa9d6_0%,#62aedd_30%,#3f8ccb_60%,#2566a8_80%,#1d4f88_100%)] text-white">
      <svg viewBox="0 0 36 36" className="ml-[9px] h-[36px] w-[36px]">
        <defs>
          <radialGradient id="orb" cx="50%" cy="35%" r="70%">
            <stop offset="0%" stopColor="#8fc4e8" />
            <stop offset="100%" stopColor="#123f5f" />
          </radialGradient>
        </defs>
        <circle cx="18" cy="18" r="17" fill="url(#orb)" stroke="#1b3346" />
        <path d="M8 11c3-2 6-2 9-1v7c-3-1-6-1-9 1z" fill="#e8572b" />
        <path d="M18 10c3 1 6 1 9-1v7c-3 2-6 2-9 1z" fill="#7fbb3c" />
        <path d="M8 19c3-2 6-2 9-1v8c-3-1-6-1-9 1z" fill="#3a9bdc" />
        <path d="M18 18c3 1 6 1 9-1v7c-3 2-6 2-9 1z" fill="#f6c223" />
      </svg>
      <div className="mr-[10px] ml-[14px] grid grid-cols-2 gap-[2px]">
        {[0, 1, 2, 3, 4, 5, 6, 7, 8, 9, 10, 11, 12, 13].map((d) => (
          <div key={d} className="h-[2px] w-[2px] bg-[#234]" />
        ))}
      </div>
      <div className="flex gap-[3px]">
        <TaskBtn>
          <svg viewBox="0 0 32 30" className="h-[30px] w-[32px]">
            <path d="M2 5h10l2 3h16v20H2z" fill="#f5d97f" stroke="#c9a94a" />
            <path d="M4 3h8v3H4zM16 5h10v3H16z" fill="#fff" />
            <path d="M8 24v-8h16v8" fill="none" stroke="#7fb7dc" strokeWidth="3" />
          </svg>
        </TaskBtn>
        <TaskBtn>
          <svg viewBox="0 0 32 26" className="h-[24px] w-[30px]">
            <path d="M1 2h7l5 14 3-8 3 8 5-14h7l-9 23h-5l-1-6-2 6H9z" fill="#e8321e" />
          </svg>
        </TaskBtn>
        <TaskBtn>
          <svg viewBox="0 0 28 34" className="h-[32px] w-[26px]" fill="none">
            <path d="M22 5C10 1 3 10 4 19c1 9 12 14 18 8 4-5-1-12-7-9" stroke="#1f7fe0" strokeWidth="5" strokeLinecap="round" />
          </svg>
        </TaskBtn>
        <TaskBtn>
          <svg viewBox="0 0 30 30" className="h-[30px] w-[30px]" fill="none">
            <circle cx="15" cy="15" r="13" fill="#fff" />
            <path d="M23 22a10 10 0 1 1 3-7H8" stroke="#5cb531" strokeWidth="4" />
          </svg>
        </TaskBtn>
        <TaskBtn active>
          <div className="flex h-[32px] w-[32px] items-center justify-center rounded-[6px] bg-[#2c6ff0]">
            <svg viewBox="0 0 20 20" className="h-[22px] w-[22px]">
              <path d="M2 7l14-5 2 4-7 2v11h-3V9L4 10z" fill="#fff" />
            </svg>
          </div>
        </TaskBtn>
      </div>
      <div className="ml-auto flex items-center gap-[8px]">
        <svg viewBox="0 0 16 16" className="h-[16px] w-[16px]">
          <rect x="1" y="5" width="14" height="9" rx="1" fill="#d8d8d8" stroke="#666" />
          <path d="M3 8h10M3 11h10" stroke="#777" />
        </svg>
        <div className="flex h-[15px] w-[15px] items-center justify-center rounded-full border border-white bg-[#2233a8] text-[10px] font-bold">?</div>
        <svg viewBox="0 0 12 16" className="h-[16px] w-[12px]" fill="none" stroke="#fff">
          <path d="M3 3h6v3H3zM5 11h3l-1.500 2z" />
        </svg>
        <svg viewBox="0 0 16 16" className="h-[16px] w-[16px]" fill="none">
          <path d="M12 3C5 0 1 6 3 11c2 4 9 4 10 0 0-3-4-4-6-2" stroke="#2f9cf0" strokeWidth="2.500" />
        </svg>
        <svg viewBox="0 0 16 16" className="h-[16px] w-[16px]">
          <circle cx="8" cy="8" r="7" fill="#6ec13c" />
          <path d="M4 8h8" stroke="#fff" strokeWidth="2" />
        </svg>
        <svg viewBox="0 0 16 16" className="h-[16px] w-[16px]">
          <rect x="3" y="1" width="7" height="9" fill="#aaa" />
          <circle cx="11" cy="11" r="4" fill="#46b83c" />
        </svg>
        <svg viewBox="0 0 16 16" className="h-[16px] w-[16px]">
          <path d="M2 6h3l5-4v12l-5-4H2z" fill="#e8773a" />
        </svg>
        <svg viewBox="0 0 16 16" className="h-[16px] w-[16px]">
          <ellipse cx="8" cy="8" rx="8" ry="7" fill="#e8c71e" />
          <path d="M4 8h8M8 4v8" stroke="#137a13" strokeWidth="2" />
        </svg>
        <svg viewBox="0 0 16 16" className="h-[16px] w-[16px]" fill="#fff">
          <path d="M1 12h2v2H1zM5 9h2v5H5zM9 6h2v8H9zM13 2h2v12h-2z" />
        </svg>
        <svg viewBox="0 0 16 16" className="h-[16px] w-[16px]" fill="#fff">
          <path d="M1 6h3l4-4v12l-4-4H1z" />
          <path d="M10 5c1.500 2 1.500 4 0 6M12 3c3 3 3 7 0 10" stroke="#fff" fill="none" />
        </svg>
      </div>
      <div className="ml-[14px] flex w-[62px] flex-col items-center text-[12px] leading-[18px]">
        <span>13:32</span>
        <span>2025/1/4</span>
      </div>
      <div className="ml-[17px] flex h-[15px] w-[16px] items-center justify-center bg-white">
        <span className="h-0 w-0 border-y-[4px] border-l-[5px] border-y-transparent border-l-[#222]" />
      </div>
      <div className="ml-[12px] h-[37px] w-[15px] border border-[#3d6b9d]" />
    </div>
  );
}

const FORMULAS = [
  [1, '外侧箍筋(1#)', '', 'B-2*bhc', 'H-2*bhc', '2*(b+h)+2*Lw+L'],
  [2, '单肢箍(3#)', '', '0', 'H-2*bhc', 'h+2*Lw+L'],
  [3, '2#', '5', '(B-2*bhc-2*gd-d)/4*1+d+2*gd', 'H-2*bhc', '2*(b+h)+2*Lw+L'],
  [4, null, '6', '(B-2*bhc-2*gd-d)/5*2+d+2*gd', 'H-2*bhc', '2*(b+h)+2*Lw+L'],
  [5, null, '7', '(B-2*bhc-2*gd-d)/6*2+d+2*gd', 'H-2*bhc', '2*(b+h)+2*Lw+L'],
  [6, null, '8', '(B-2*bhc-2*gd-d)/7*2+d+2*gd', 'H-2*bhc', '2*(b+h)+2*Lw+L'],
  [7, null, '9', '(B-2*bhc-2*gd-d)/8*2+d+2*gd', 'H-2*bhc', '2*(b+h)+2*Lw+L'],
];

const Cell = 'border border-[#d8d8d8] p-0 pl-[3px] text-left font-normal';
const Head = 'border border-[#d8d8d8] bg-[#f0f0f0] p-0 text-center font-normal';

function FormulaTable() {
  return (
    <table className="-ml-px w-[758px] table-fixed border-collapse text-[12px] text-[#333]">
      <colgroup>
        <col className="w-[21px]" />
        <col className="w-[101px]" />
        <col className="w-[61px]" />
        <col className="w-[202px]" />
        <col className="w-[100px]" />
        <col className="w-[212px]" />
        <col className="w-[61px]" />
      </colgroup>
      <thead>
        <tr className="h-[19px]">
          <th className={Head} />
          <th className={Head}>箍筋编号</th>
          <th className={Head}>纵筋数量</th>
          <th className="border border-[#7cb9f7] bg-[#7cb9f7] p-0 text-center font-bold text-white">b 边长度计算</th>
          <th className={Head}>h 边长度计算</th>
          <th className={Head}>箍筋总长计算</th>
          <th className={Head}>是否输出</th>
        </tr>
      </thead>
      <tbody>
        {FORMULAS.map(([n, name, count, b, h, total]) => (
          <tr key={n} className="h-[21px]">
            <td className={`border border-[#d8d8d8] p-0 text-center ${n === 4 ? 'bg-[#73b3f3] font-bold text-white' : 'bg-[#f0f0f0]'}`}>{n}</td>
            {name && (
              <td rowSpan={n === 3 ? 5 : 1} className={`${Cell} bg-[#fffde8]`}>
                {name}
              </td>
            )}
            <td className={`${Cell} bg-[#fffde8]`}>{count}</td>
            <td className={n === 4 ? 'border-[2px] border-[#62a8ec] p-0 pl-[3px]' : Cell}>{b}</td>
            <td className={Cell}>{h}</td>
            <td className={Cell}>{total}</td>
            {n < 4 && (
              <td rowSpan={n === 3 ? 5 : 1} className={Cell}>
                <div className="flex justify-center pr-[3px]">
                  <Check state="on" />
                </div>
              </td>
            )}
          </tr>
        ))}
      </tbody>
    </table>
  );
}

function StirrupDiagram() {
  const rebar = [
    [442, 157], [571, 157], [700, 157], [829, 157],
    [442, 952], [571, 952], [700, 952], [829, 952],
    [313, 287], [958, 287], [313, 1081], [958, 1081],
  ];
  return (
    <svg viewBox="27 93 1152 1113" className="h-[371px] w-[384px] bg-black">
      <rect x="217" y="193" width="843" height="987" fill="none" stroke="#fff" strokeWidth="3" />
      <g fill="none" stroke="#ff0000" strokeWidth="5">
        <rect x="282" y="255" width="711" height="857" />
        <rect x="411" y="126" width="324" height="859" />
        <path d="M863 126V983M590 225L672 140M638 271L735 180M719 225L805 130M848 351L935 270M895 400L990 307M707 866L815 985" />
      </g>
      <g fill="#ff0000">
        {rebar.map(([x, y]) => (
          <circle key={`${x}-${y}`} cx={x} cy={y} r="31" />
        ))}
      </g>
      <g fill="#fff" fontFamily="'Liberation Serif',serif" fontSize="165">
        <text x="382" y="680">2#</text>
        <text x="775" y="680">3#</text>
        <text x="165" y="776">1#</text>
      </g>
    </svg>
  );
}

function SettingsDialog() {
  return (
    <div className="absolute top-[155px] left-[408px] flex h-[729px] w-[1105px] flex-col bg-white text-[12px] text-[#333] shadow-[0_0_12px_rgba(0,0,0,0.65)]">
      <div className="flex h-[40px] shrink-0 items-center pr-[13px] pb-[2px] pl-[11px]">
        <span className="text-[14px]">计算设置</span>
        <div className="ml-auto flex items-center gap-[15px] text-[#555]">
          <Minus size={13} />
          <Square size={11} />
          <X size={14} />
        </div>
      </div>
      <div className="flex h-[26px] shrink-0 items-end gap-[2px] pl-[11px]">
        {['计算规则', '节点设置', '箍筋设置', '搭接设置'].map((t) => (
          <div key={t} className="flex h-[22px] w-[61px] items-center justify-center rounded-t-[3px] bg-[#eeeeee]">
            {t}
          </div>
        ))}
        <div className="relative z-10 -mb-px ml-[1px] flex h-[26px] w-[60px] items-center justify-center rounded-t-[3px] border border-b-0 border-[#d0d0d0] bg-white text-[#2b7fe6]">箍筋公式</div>
      </div>
      <div className="mx-[11px] flex h-[620px] shrink-0 flex-col border border-[#d0d0d0] px-[9px]">
        <div className="flex h-[41px] shrink-0 items-center pl-[8px]">
          <span className="w-[66px]">箍筋肢数：</span>
          <div className="flex h-[25px] w-[79px] items-center justify-between rounded-[3px] border border-[#d0d0d0] pr-[6px] pl-[3px]">
            5肢箍(1型)
            <Caret />
          </div>
        </div>
        <div className="h-[513px] shrink-0 border border-[#d0d0d0]">
          <FormulaTable />
        </div>
        <div className="mt-[7px] flex h-[26px] shrink-0 items-center">
          <span className="w-[112px]">双肢箍调整长度 L：</span>
          <div className="flex h-[26px] w-[207px] items-center rounded-[2px] border border-[#d0d0d0] pl-[3px]">0</div>
          <span className="ml-[215px] w-[112px]">单肢箍调整长度 L：</span>
          <div className="flex h-[26px] w-[207px] items-center rounded-[2px] border border-[#d0d0d0] pl-[3px]">0</div>
        </div>
        <div className="mt-[6px] leading-[18px] tracking-[0.2px]">B- 表示 B 边的长度尺寸；bhc- 表示保护层厚度；d- 表示该排纵筋的最大直径；gd- 表示箍筋直径</div>
      </div>
      <div className="mt-[7px] flex gap-[7px] pl-[11px]">
        {['导入规则', '导出规则', '恢复默认值'].map((b) => (
          <div key={b} className="flex h-[26px] w-[79px] items-center justify-center rounded-[3px] border border-[#d0d0d0]">
            {b}
          </div>
        ))}
      </div>
      <div className="absolute top-[226px] left-[683px] flex h-[398px] w-[399px] flex-col border border-[#cfcfcf] bg-white pl-[7px]">
        <div className="flex h-[19px] shrink-0 items-center pt-[2px] text-[12px] text-[#222]">箍筋公式示意图</div>
        <StirrupDiagram />
      </div>
      <svg viewBox="0 0 8 8" className="absolute right-[3px] bottom-[3px] h-[8px] w-[8px]" fill="#999">
        <path d="M6 0h2v2H6zM3 3h2v2H3zM6 3h2v2H6zM0 6h2v2H0zM3 6h2v2H3zM6 6h2v2H6z" />
      </svg>
    </div>
  );
}

export default function App() {
  return (
    <div className="relative flex h-[1080px] w-[1920px] flex-col overflow-hidden bg-[#f2f2f2] [font-family:'Noto_Sans','Noto_Sans_CJK_SC',sans-serif]">
      <TitleBar />
      <TabBar />
      <Ribbon />
      <ComboBar />
      <div className="flex h-[822px] shrink-0">
        <NavPanel />
        <MiddlePanels />
        <CanvasArea />
        <DisplayPanel />
      </div>
      <StatusBar />
      <TaskBar />
      <SettingsDialog />
    </div>
  );
}
